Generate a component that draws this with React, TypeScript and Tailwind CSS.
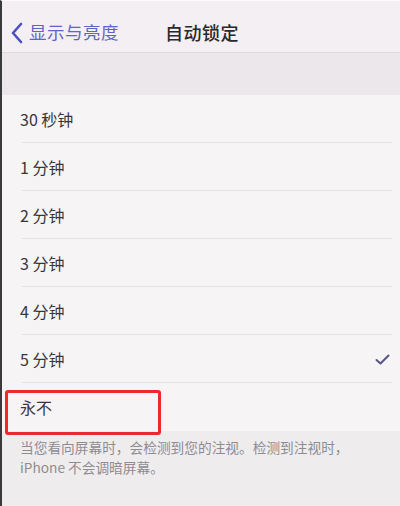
import React from 'react';

const options = ['30 秒钟', '1 分钟', '2 分钟', '3 分钟', '4 分钟', '5 分钟', '永不'];
const selected = '5 分钟';

const Row = ({ label, last }: { label: string; last: boolean }) => (
  <div className="relative h-[48px] flex items-center pl-[18px] pr-[10px]">
    <span className="text-[16px] text-[#38373b]">{label}</span>
    <div className="flex-1" />
    {label === selected && (
      <svg width="15" height="11" viewBox="0 0 15 11">
        <path d="M1.5 6 L5.5 9.5 L13.5 1.5" fill="none" stroke="#57558a" strokeWidth="2" strokeLinecap="round" strokeLinejoin="round" />
      </svg>
    )}
    {!last && <div className="absolute left-[20px] right-[8px] bottom-0 h-px bg-[#e4e0e3]" />}
    {label === '永不' && (
      <div className="absolute left-[3px] top-[7px] w-[156px] h-[45px] border-[3px] border-[#ec2a2e] rounded-[3px]" />
    )}
  </div>
);

const App = () => {
  return (
    <div
      className="w-[400px] h-[506px] overflow-hidden flex flex-col bg-[#efecee] border-l-[2px] border-[#3a3a3c] border-t border-t-[#fbfafb]"
      style={{ fontFamily: '"Noto Sans CJK SC", "Noto Sans", sans-serif' }}
    >
      <header className="h-[52px] bg-[#f3eff2] flex items-center relative border-b border-[#dedadd] pt-[12px]">
        <div className="flex items-center pl-[8px]">
          <svg width="14" height="22" viewBox="0 0 14 22">
            <path d="M11 2 L3 11 L11 20" fill="none" stroke="#4c4fc0" strokeWidth="2.6" strokeLinecap="round" strokeLinejoin="round" />
          </svg>
          <span className="ml-[5px] text-[17.5px] tracking-[0.5px] text-[#6064c6]">显示与亮度</span>
        </div>
        <span className="absolute left-[163px] text-[18px] font-medium text-[#2a292c] tracking-[0.5px]">自动锁定</span>
      </header>
      <div className="h-[42px] bg-[#ebe7ea]" />
      <div className="bg-[#f7f4f5]">
        {options.map((o, i) => (
          <Row key={o} label={o} last={i === options.length - 1} />
        ))}
      </div>
      <p className="pt-[6px] pl-[18px] pr-[10px] text-[13.7px] leading-[20px] text-[#8e8c91]">
        当您看向屏幕时，会检测到您的注视。检测到注视时，
        <br />
        iPhone 不会调暗屏幕。
      </p>
    </div>
  );
};

export default App;
